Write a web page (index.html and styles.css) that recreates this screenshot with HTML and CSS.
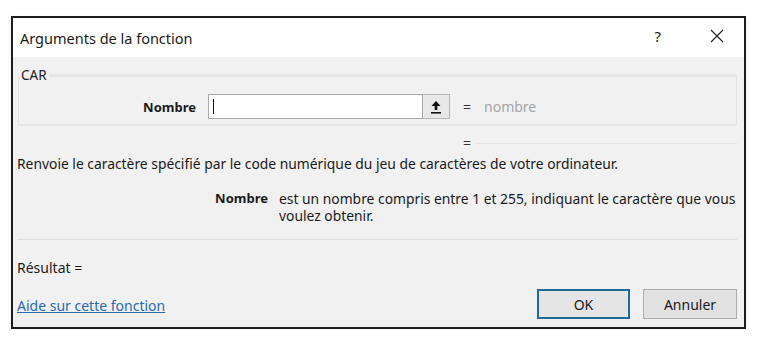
FILE: index.html
```html
<!DOCTYPE html>
<html lang="fr">
<head>
<meta charset="utf-8">
<title>Arguments de la fonction</title>
<link rel="stylesheet" href="styles.css">
</head>
<body>
<div class="dialog">
  <div class="titlebar">
    <span class="title">Arguments de la fonction</span>
    <span class="help">?</span>
    <span class="close">
      <svg width="14" height="14" viewBox="0 0 14 14"><path d="M1 1 L13 13 M13 1 L1 13" stroke="#222" stroke-width="1.1" fill="none"/></svg>
    </span>
  </div>
  <div class="body">
    <fieldset class="group">
      <legend>CAR</legend>
      <div class="arg-row">
        <label class="arg-label">Nombre</label>
        <div class="input"><span class="caret"></span></div>
        <div class="ref-btn">
          <svg width="12" height="14" viewBox="0 0 12 14"><path d="M6 1 L10.5 6 L7.3 6 L7.3 10 L4.7 10 L4.7 6 L1.5 6 Z" fill="#111"/><rect x="1" y="12" width="10" height="1.6" fill="#111"/></svg>
        </div>
        <span class="eq">=</span>
        <span class="hint">nombre</span>
      </div>
    </fieldset>
    <div class="eq-row">
      <span class="eq">=</span>
      <span class="eq-line"></span>
    </div>
    <p class="desc">Renvoie le caractère spécifié par le code numérique du jeu de caractères de votre ordinateur.</p>
    <div class="arg-help">
      <span class="arg-name">Nombre</span>
      <span class="arg-text">est un nombre compris entre 1 et 255, indiquant le caractère que vous voulez obtenir.</span>
    </div>
    <div class="sep"></div>
    <div class="result">Résultat =</div>
    <div class="footer">
      <a class="help-link" href="#">Aide sur cette fonction</a>
      <div class="buttons">
        <button class="btn btn-ok">OK</button>
        <button class="btn">Annuler</button>
      </div>
    </div>
  </div>
</div>
</body>
</html>
```
FILE: styles.css
```css
* { box-sizing: border-box; }
html, body { margin: 0; padding: 0; background: #ffffff; }
body {
  font-family: "Noto Sans", "Open Sans", sans-serif;
  font-size: 14px;
  color: #1a1a1a;
  padding: 16px 0 0 11px;
}
.dialog {
  width: 735px;
  height: 313px;
  border: 2px solid #1e1e1e;
  display: flex;
  flex-direction: column;
  background: #f1f1f1;
  box-shadow: 0 2px 6px rgba(0,0,0,0.08);
}
.titlebar {
  height: 39px;
  background: #ffffff;
  display: flex;
  align-items: center;
  padding-left: 7px;
}
.title {
  font-size: 14.5px;
  color: #1a1a1a;
  flex: 1;
}
.help {
  font-size: 15px;
  color: #222;
  margin-right: 49px;
  margin-top: -4px;
}
.close {
  display: flex;
  margin-right: 20px;
  margin-top: -4px;
}
.body {
  flex: 1;
  display: flex;
  flex-direction: column;
  padding: 0 7px 0 4px;
}
.group {
  margin: 10px 0 0 1px;
  padding: 11px 0 5px 0;
  border: 1px solid #e2e2e2;
  border-top: 3px solid #e6e6e6;
  border-bottom: 2px solid #e6e6e6;
  min-inline-size: 0;
}
.group legend {
  padding: 0 2px;
  margin-left: 0;
  font-size: 13.5px;
  line-height: 16px;
  color: #222;
}
.arg-row {
  display: flex;
  align-items: center;
  height: 25px;
}
.arg-label {
  width: 177px;
  text-align: right;
  font-weight: bold;
  font-size: 13px;
  margin-right: 12px;
}
.input {
  width: 215px;
  height: 25px;
  background: #ffffff;
  border: 1px solid #a9a9a9;
  display: flex;
  align-items: center;
  padding-left: 4px;
}
.caret {
  width: 1px;
  height: 15px;
  background: #111;
}
.ref-btn {
  width: 27px;
  height: 25px;
  background: #e8e8e8;
  border: 1px solid #b8b8b8;
  border-left: none;
  display: flex;
  align-items: center;
  justify-content: center;
}
.eq {
  margin-left: 13px;
  color: #333;
}
.hint {
  margin-left: 13px;
  color: #a4a4a4;
}
.eq-row {
  display: flex;
  align-items: center;
  height: 14px;
  margin-top: 10px;
  padding-left: 446px;
}
.eq-row .eq { margin-left: 0; line-height: 14px; }
.eq-line {
  flex: 1;
  margin-left: 4px;
  border-top: 1px solid #e4e4e4;
}
.desc {
  margin: 5px 0 0 0;
  font-size: 13.85px;
  line-height: 17px;
}
.arg-help {
  display: flex;
  margin-top: 18px;
  line-height: 17px;
}
.arg-name {
  width: 251px;
  text-align: right;
  font-weight: bold;
  font-size: 13px;
  flex-shrink: 0;
  margin-right: 11px;
}
.arg-text { flex: 1; font-size: 13.85px; }
.sep {
  margin-top: 15px;
  border-top: 1px solid #dcdcdc;
}
.result {
  margin-top: 19px;
  line-height: 17px;
}
.footer {
  margin-top: 13px;
  display: flex;
  align-items: center;
  justify-content: space-between;
}
.help-link {
  color: #2a6ab0;
  text-decoration: underline;
  margin-top: 3px;
}
.buttons {
  display: flex;
  gap: 13px;
}
.btn {
  width: 94px;
  height: 30px;
  font-family: inherit;
  font-size: 14px;
  color: #1a1a1a;
  background: #e1e1e1;
  border: 1px solid #adadad;
  padding: 0;
}
.btn-ok {
  width: 93px;
  border: 2px solid #1f6a9a;
  background: #e5e5e5;
}
```
